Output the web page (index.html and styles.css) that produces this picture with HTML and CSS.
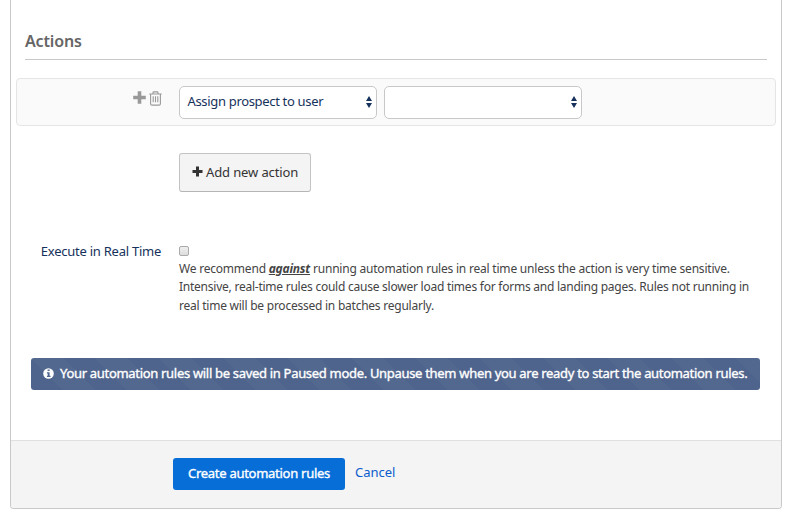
FILE: index.html
```html
<!DOCTYPE html>
<html lang="en">
<head>
<meta charset="utf-8">
<title>Automation rule</title>
<link rel="stylesheet" href="styles.css">
</head>
<body>
<form class="panel">
  <main class="content">
    <h2 class="heading"><span>Actions</span></h2>
    <section class="rule">
      <div class="tools">
        <svg class="plus" viewBox="0 0 13 13"><path d="M4.700 .2h3.600v4.500h4.500v3.600H8.300v4.500H4.700V8.300H.2V4.700h4.500z"/></svg>
        <svg class="trash" viewBox="0 0 13 15"><path d="M.3 3h12.400M4 3V1.700Q4 .9 4.800 .9h3.400Q9 .9 9 1.700V3M1.600 3v9.700q0 1.400 1.400 1.400h7q1.400 0 1.400-1.400V3M4.200 5.300v6M6.500 5.300v6M8.800 5.300v6"/></svg>
      </div>
      <div class="select"><span class="select-text">Assign prospect to user</span><svg class="arrows" viewBox="0 0 6 12"><path d="M3 0l3 5H0zM0 7h6l-3 5z"/></svg></div>
      <div class="select"><span></span><svg class="arrows" viewBox="0 0 6 12"><path d="M3 0l3 5H0zM0 7h6l-3 5z"/></svg></div>
    </section>
    <button type="button" class="add"><svg class="add-plus" viewBox="0 0 11 11"><path d="M4 .5h3v3.500h3.500v3H7v3.500H4V7H.5V4H4z"/></svg><span class="add-text">Add new action</span></button>
    <div class="field">
      <label class="label" for="realtime"><span>Execute in Real Time</span></label>
      <div class="control">
        <input class="check" type="checkbox" id="realtime">
        <p class="help"><span class="l1">We recommend <em>against</em> running automation rules in real time unless the action is very time sensitive.</span><br><span class="l2">Intensive, real-time rules could cause slower load times for forms and landing pages. Rules not running in</span><br><span class="l3">real time will be processed in batches regularly.</span></p>
      </div>
    </div>
    <div class="notice"><svg class="info" viewBox="0 0 11 11"><circle cx="5.500" cy="5.500" r="5.300" fill="#fff"/><path d="M4.600 1.500h2v1.600h-2zM3.900 4.200h2.700v3.600h.9V9H3.900V7.800h.8V5.400h-.8z" fill="#50658d"/></svg><span class="notice-text">Your automation rules will be saved in Paused mode. Unpause them when you are ready to start the automation rules.</span></div>
  </main>
  <footer class="footer">
    <button type="button" class="create"><span>Create automation rules</span></button>
    <a class="cancel" href="#">Cancel</a>
  </footer>
</form>
</body>
</html>
```
FILE: styles.css
```css
* { box-sizing: border-box; }
body {
  margin: 0;
  background: #fff;
  color: #16325c;
  font: 13px/18px "Noto Sans", "Open Sans", sans-serif;
  overflow: hidden;
}
span { white-space: nowrap; }
svg { display: block; flex: none; }
.panel {
  width: 772px;
  height: 509px;
  margin: 0 0 0 10px;
  border: 1px solid #c8c8c8;
  border-top: 0;
  border-radius: 0 0 4px 4px;
  display: flex;
  flex-direction: column;
}
.content { height: 440px; padding: 30px 5px 0; }
.heading {
  margin: 0 9px 18px;
  height: 30px;
  border-bottom: 1px solid #c8c8c8;
  color: #666;
  font-size: 16px;
  line-height: 22px;
  font-weight: 600;
  letter-spacing: -.15px;
}
.rule {
  height: 48px;
  display: flex;
  gap: 7px;
  padding: 7px 0 0 116px;
  border: 1px solid #e5e5e5;
  border-radius: 4px;
  background: #fafafa;
}
.tools { display: flex; gap: 3px; width: 39px; padding-top: 5px; }
.plus { width: 13px; height: 13px; fill: #999; }
.trash { width: 13px; height: 15px; fill: none; stroke: #999; stroke-width: 1.1; }
.select {
  width: 198px;
  height: 33px;
  display: flex;
  align-items: center;
  justify-content: space-between;
  padding: 0 4px 2px 7.500px;
  border: 1px solid #c8c8c8;
  border-radius: 5px;
  background: #fff;
}
.select-text { letter-spacing: -.33px; margin-top: -1px; }
.arrows { width: 6px; height: 12px; margin-top: 1px; fill: #16325c; }
.add {
  width: 132px;
  height: 39px;
  margin: 27px 0 0 163px;
  padding: 0 0 1px 12px;
  display: flex;
  align-items: center;
  gap: 3px;
  border: 1px solid #c4c4c4;
  border-bottom-color: #b5b5b5;
  border-radius: 3px;
  background: #f4f4f4;
  color: #333;
  font: inherit;
}
.add-text { letter-spacing: -.12px; }
.add-plus { width: 11px; height: 11px; margin-top: -2px; fill: #333; }
.field { display: flex; margin-top: 50px; height: 116px; }
.label { width: 145px; text-align: right; margin-right: 18px; letter-spacing: -.25px; }
.check {
  appearance: none;
  display: block;
  width: 10px;
  height: 10px;
  margin: 4px 0 3.500px;
  border: 1px solid #aaa;
  border-radius: 2px;
  background: linear-gradient(#eee, #ddd);
}
.help {
  margin: 0;
  font-size: 12px;
  line-height: 18.500px;
  letter-spacing: -.24px;
  color: #444;
}
.l1 { letter-spacing: -.21px; }
.help em { font-weight: 700; text-decoration: underline; }
.notice {
  width: 729px;
  height: 32px;
  margin-left: 15px;
  padding: 0 0 0 12px;
  display: flex;
  align-items: center;
  gap: 6px;
  border-radius: 3px;
  background: repeating-linear-gradient(45deg, #4f648c 0 22.627px, #53688f 22.627px 45.255px);
  color: #fff;
}
.notice-text { margin-top: -2px; letter-spacing: -.31px; -webkit-text-stroke: .35px #fff; }
.info { width: 11px; height: 11px; margin-top: -1px; }
.footer {
  flex: 1;
  display: flex;
  align-items: flex-start;
  gap: 10px;
  padding: 17px 0 0 162px;
  border-top: 1px solid #e0e0e0;
  border-radius: 0 0 3px 3px;
  background: #f4f4f4;
}
.create {
  width: 172px;
  height: 32px;
  padding: 0 0 2px;
  border: 0;
  border-radius: 3px;
  background: #076ed8;
  color: #fff;
  font: inherit;
  letter-spacing: -.27px;
  -webkit-text-stroke: .35px #fff;
}
.cancel { color: #0b5cce; text-decoration: none; margin-top: 5px; }
```
